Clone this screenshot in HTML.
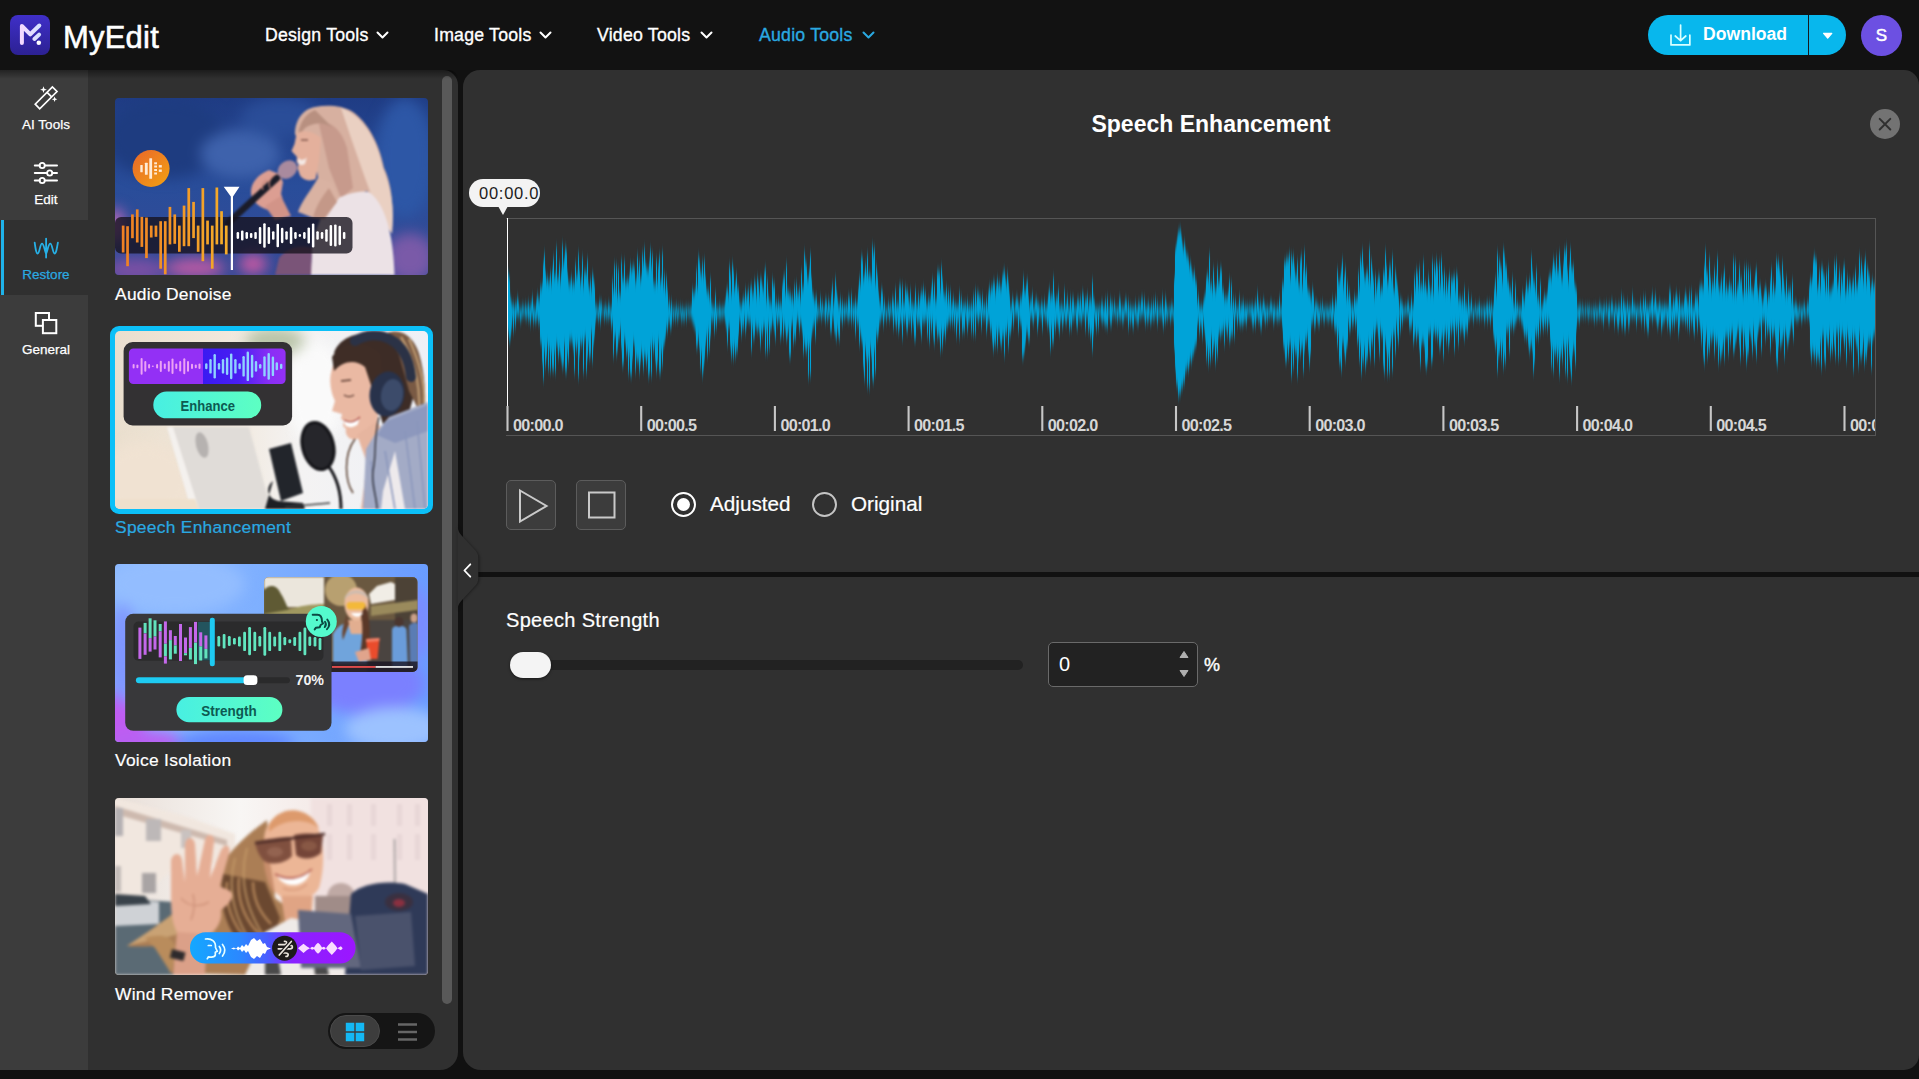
<!DOCTYPE html>
<html lang="en">
<head>
<meta charset="utf-8">
<title>MyEdit - Speech Enhancement</title>
<style>
*{box-sizing:border-box;margin:0;padding:0}
html,body{width:1919px;height:1079px;overflow:hidden;background:#111}
body{font-family:"Liberation Sans",sans-serif;color:#fff;position:relative}
.abs{position:absolute}
/* top bar */
#top{position:absolute;left:0;top:0;width:1919px;height:70px;background:#121212}
#logo{position:absolute;left:10px;top:15px;width:40px;height:40px;border-radius:8px;background:linear-gradient(180deg,#3f2fc8 0%,#2c2193 100%)}
#brand{position:absolute;left:63px;top:19.5px;font-size:31px;line-height:36px;letter-spacing:.2px;-webkit-text-stroke:.55px #fff;color:#fff;white-space:nowrap}
.nav{position:absolute;top:23px;font-size:17.7px;letter-spacing:.22px;line-height:24px;white-space:nowrap;color:#fff;-webkit-text-stroke:.35px currentColor}
.nav.on{color:#2aa9e1}
.chev{position:absolute;top:31px;width:13px;height:9px}
#dl{position:absolute;left:1648px;top:15px;width:198px;height:40px;border-radius:20px;background:#08b7ed}
#dl .sep{position:absolute;left:160px;top:0;width:1px;height:40px;background:#15191c}
#dl .t{position:absolute;left:55px;top:8px;font-size:17.6px;line-height:22px;font-weight:bold;color:#fff;white-space:nowrap}
#av{position:absolute;left:1861px;top:15px;-webkit-text-stroke:.5px #fff;width:41px;height:41px;border-radius:50%;background:#6c50e2;text-align:center;font-size:17px;line-height:41px;color:#fff}
/* sidebar */
#side{position:absolute;left:0;top:70px;width:88px;height:1000px;background:#3c3c3c}
.sitem{position:absolute;left:0;width:88px;height:75px;text-align:center}
.sitem .lb{position:absolute;left:0;width:92px;top:47px;font-size:13.5px;line-height:16px;text-align:center;color:#fff;-webkit-text-stroke:.25px currentColor}
.sitem.on{background:#303030}
.sitem.on .lb{color:#2aa9e1}
.sitem.on:before{content:"";position:absolute;left:1px;top:0;width:3px;height:75px;background:#1fb3ea}
.sitem svg{position:absolute}
/* tool list panel */
#list{position:absolute;left:88px;top:70px;width:370px;height:1000px;background:#303030;border-radius:0 15px 18px 0}
#sb{position:absolute;left:442px;top:76px;width:10px;height:928px;border-radius:5px;background:#595959}
.th{position:absolute;left:115px;width:313px;height:177px;border-radius:4px;overflow:hidden}
.cap{position:absolute;left:115px;font-size:17.4px;letter-spacing:.28px;line-height:20px;white-space:nowrap;color:#fff;-webkit-text-stroke:.2px currentColor}
.cap.on{color:#2aa9e1}
/* main panel */
#main{position:absolute;left:463px;top:70px;width:1456px;height:1000px;background:#303030;border-radius:17px 15px 15px 18px}
</style>
</head>
<body>
<div id="top"></div>
<div id="logo"><svg width="40" height="40" viewBox="0 0 40 40" style="position:absolute;left:0;top:0"><defs><linearGradient id="lgm" x1="0" y1="0" x2="1" y2="0"><stop offset="0" stop-color="#f3d9ff"/><stop offset="1" stop-color="#d6e2ff"/></linearGradient></defs><path d="M11.900 27.900L11.900 11L20.300 19.300L29.300 10.500M29.100 19.600L24.400 24" stroke="url(#lgm)" stroke-width="4" fill="none" stroke-linecap="round" stroke-linejoin="round"/><circle cx="28.800" cy="27.700" r="2.300" fill="#fff"/></svg></div>
<div id="brand">MyEdit</div>
<div class="nav" style="left:265px">Design Tools</div>
<div class="nav" style="left:434px">Image Tools</div>
<div class="nav" style="left:597px">Video Tools</div>
<div class="nav on" style="left:759px">Audio Tools</div>
<svg class="chev" style="left:376px" viewBox="0 0 13 9"><path d="M1.500 1.500L6.500 6.500L11.500 1.500" stroke="#fff" stroke-width="2" fill="none" stroke-linecap="round" stroke-linejoin="round"/></svg><svg class="chev" style="left:539px" viewBox="0 0 13 9"><path d="M1.500 1.500L6.500 6.500L11.500 1.500" stroke="#fff" stroke-width="2" fill="none" stroke-linecap="round" stroke-linejoin="round"/></svg><svg class="chev" style="left:700px" viewBox="0 0 13 9"><path d="M1.500 1.500L6.500 6.500L11.500 1.500" stroke="#fff" stroke-width="2" fill="none" stroke-linecap="round" stroke-linejoin="round"/></svg><svg class="chev" style="left:862px" viewBox="0 0 13 9"><path d="M1.500 1.500L6.500 6.500L11.500 1.500" stroke="#2aa9e1" stroke-width="2" fill="none" stroke-linecap="round" stroke-linejoin="round"/></svg>
<div id="dl"><div class="sep"></div><svg width="198" height="40" viewBox="0 0 198 40" style="position:absolute;left:0;top:0"><path d="M23 20.200V29.900H41.850V20.200M32.600 10.100V25.700M27.250 21L32.600 25.700L37.800 21" stroke="#d9ffff" stroke-width="1.700" fill="none" stroke-linecap="round" stroke-linejoin="round"/><path d="M175.600 18.300L183.800 18.300L179.700 23.200Z" fill="#fff" stroke="#fff" stroke-width="1.200" stroke-linejoin="round"/></svg><div class="t">Download</div></div>
<div id="av">S</div>

<div id="side">
 <div class="sitem" style="top:0"><svg style="left:30px;top:10px" width="32" height="32" viewBox="0 0 32 32"><path d="M5.200 24.200L9.700 28.800L27 11.500L22.400 6.900Z M17.300 12.600L21.600 16.900" stroke="#fff" stroke-width="1.700" fill="none" stroke-linejoin="miter"/><path d="M13.500 6.300L14.400 8.800L16.900 9.700L14.400 10.600L13.500 13.100L12.600 10.600L10.100 9.700L12.600 8.800Z M24.600 16.500L25.400 18.500L27.400 19.300L25.400 20.100L24.600 22.100L23.800 20.100L21.800 19.300L23.800 18.500Z" fill="#fff"/></svg><div class="lb">AI Tools</div></div>
 <div class="sitem" style="top:75px"><svg style="left:30px;top:10px" width="32" height="32" viewBox="0 0 32 32"><path d="M4.800 10.550H9.600M14.800 10.550H27M4.800 18H17.100M22.300 18H27M4.800 25.500H9.600M14.800 25.500H27" stroke="#fff" stroke-width="2" stroke-linecap="round"/><circle cx="12.200" cy="10.550" r="2.600" fill="none" stroke="#fff" stroke-width="1.800"/><circle cx="19.700" cy="18" r="2.600" fill="none" stroke="#fff" stroke-width="1.800"/><circle cx="12.200" cy="25.500" r="2.600" fill="none" stroke="#fff" stroke-width="1.800"/></svg><div class="lb">Edit</div></div>
 <div class="sitem on" style="top:150px"><svg style="left:30px;top:10px" width="32" height="32" viewBox="0 0 32 32"><path d="M4.700 12.600C5.600 19 6.200 23.500 7.700 23.500C9.600 23.500 10 13.600 12 13.600C13.800 13.600 14.400 20 16.100 23.800C17.800 20 18.400 13.600 20.300 13.600C22.300 13.600 22.700 23.500 24.600 23.500C26.100 23.500 26.800 19 27.900 12.600M16.100 8.600V27.500" stroke="#27b0e6" stroke-width="1.800" fill="none" stroke-linecap="round" stroke-linejoin="round"/></svg><div class="lb">Restore</div></div>
 <div class="sitem" style="top:225px"><svg style="left:30px;top:10px" width="32" height="32" viewBox="0 0 32 32"><rect x="5.800" y="8" width="13.200" height="12.800" fill="none" stroke="#fff" stroke-width="2"/><rect x="12.900" y="15" width="13.400" height="13.200" fill="#3c3c3c" stroke="#fff" stroke-width="2"/></svg><div class="lb">General</div></div>
</div>

<div id="list"></div>
<div id="sb"></div>
<div style="position:absolute;left:0;top:70px;width:458px;height:9px;border-radius:0 15px 0 0;background:linear-gradient(rgba(0,0,0,.42),rgba(0,0,0,0))"></div>
<div id="main"></div>
<svg class="abs" style="left:452px;top:520px;z-index:5" width="34" height="96" viewBox="0 0 34 96"><defs><filter id="tabsh" x="-30%" y="-10%" width="160%" height="120%"><feGaussianBlur stdDeviation="1.500"/></filter></defs><path d="M6 4C6 11 8 14 12 18L23 30C26 33 27.500 35 27.500 39V58C27.500 62 26 64 23 67L12 79C8 83 6 86 6 92Z" fill="#000" opacity=".4" filter="url(#tabsh)"/><path d="M5.500 3C5.500 10 7 13 11 17L22 29C25 32 26.300 34 26.300 38V58C26.300 62 25 64 22 67L11 79C7 83 5.500 86 5.500 92Z" fill="#303030"/><path d="M18.300 44.300L12.400 50.500L18.300 56.700" stroke="#fff" stroke-width="1.800" fill="none" stroke-linecap="round" stroke-linejoin="round"/></svg>

<style>
.th svg{position:absolute;left:0;top:0;display:block}
#selb{position:absolute;left:110px;top:326px;width:323px;height:188px;border-radius:9px;background:#0cc0f8}
.pilltxt{font-family:"Liberation Sans",sans-serif;font-weight:bold}
</style>
<div class="th" style="top:98px"><svg width="313" height="177" viewBox="0 0 313 177">
<defs>
<filter id="b1" x="-10%" y="-10%" width="120%" height="120%" color-interpolation-filters="sRGB"><feGaussianBlur stdDeviation="7"/></filter>
<filter id="b2" x="-10%" y="-10%" width="120%" height="120%" color-interpolation-filters="sRGB"><feGaussianBlur stdDeviation="1.6"/></filter>
<filter id="b3" x="-10%" y="-10%" width="120%" height="120%" color-interpolation-filters="sRGB"><feGaussianBlur stdDeviation="0.8"/></filter>
<linearGradient id="g1bg" x1="0" y1="0" x2="0" y2="1"><stop offset="0" stop-color="#1f3c84"/><stop offset=".5" stop-color="#294d9a"/><stop offset="1" stop-color="#364a96"/></linearGradient>
<linearGradient id="g1o" x1="0" y1="0" x2="1" y2="0"><stop offset="0" stop-color="#f07d1e"/><stop offset="1" stop-color="#f2a628"/></linearGradient>
<linearGradient id="g1c" x1="0" y1="0" x2="1" y2="1"><stop offset="0" stop-color="#e9662a"/><stop offset="1" stop-color="#f2a212"/></linearGradient>
</defs>
<rect width="313" height="177" fill="url(#g1bg)"/>
<g filter="url(#b1)">
<ellipse cx="0" cy="128" rx="10" ry="18" fill="#b868b8"/><ellipse cx="20" cy="172" rx="30" ry="12" fill="#7a50a4"/>
<ellipse cx="80" cy="170" rx="30" ry="10" fill="#b85aa4"/>
<ellipse cx="138" cy="166" rx="14" ry="10" fill="#c85aa4"/>
<ellipse cx="50" cy="40" rx="60" ry="40" fill="#1e3c80"/>
<ellipse cx="125" cy="56" rx="40" ry="24" fill="#3e62ac"/>
<ellipse cx="290" cy="60" rx="30" ry="60" fill="#2d57a6"/>
<ellipse cx="295" cy="160" rx="25" ry="25" fill="#7a5aa8"/>
<ellipse cx="165" cy="20" rx="40" ry="20" fill="#2a4d98"/>
</g>
<g filter="url(#b3)">
<path d="M200 9C188 11 180 22 180 36L184 44L200 60L203 80C196 92 186 104 183 114L196 118L209 121L222 104L252 93L276 134C280 110 276 84 269 70C264 44 252 24 238 14C226 7 212 7 200 9Z" fill="#d7b0a0"/>
<path d="M226 10C246 16 262 40 268 70C276 90 280 110 277 136L262 112L250 80L236 40Z" fill="#ead0c2"/>
<path d="M204 26C214 22 226 30 232 50L238 90L226 100L214 70Z" fill="#c79a8c"/>
<path d="M200 12C190 16 184 26 183 38L190 30C198 24 210 24 218 30Z" fill="#b89080"/>
<path d="M181.500 36C186 32 196 32 206 40L204 62L200.700 81C194 84 188 82 185 77.600L182.500 70L183.500 66L181.500 64L182 59L176.500 53L179.500 46Z" fill="#e4b09c"/>
<path d="M183 60C186 63 190 62 192 59L190 66C187 68 184 67 183 65Z" fill="#f4e8e4"/>
<path d="M186 42L193 42" stroke="#6a4038" stroke-width="1.2"/>
<path d="M197 151C200 130 208 112 218 103C230 96 244 92 254 94C268 104 278 130 279.500 177L195.500 177Z" fill="#ece2e6"/>
<path d="M160 177L164 160C172 150 184 146 197 150L196 177Z" fill="#7a5478"/>
<path d="M203 80C198 92 188 104 184 114L198 120L210 121L224 100L216 84Z" fill="#d9b2a2"/>
<path d="M214 90C206 100 200 110 198 120L209 121L222 104Z" fill="#c49888"/>
<path d="M136 94C136 84 144 76 154 72L164 76L168 84L166 96C170 104 166 112 158 114L148 110C140 106 136 100 136 94Z" fill="#dc9e92"/>
<path d="M150 108L166 98L176 118L160 122Z" fill="#d29488"/>
<path d="M162 80L113 125" stroke="#1b1c28" stroke-width="6.500" stroke-linecap="round"/>
<ellipse cx="172.400" cy="71.600" rx="10.500" ry="8.500" transform="rotate(-38 172.400 71.600)" fill="#a98a9e"/>
<path d="M152 82C148 84 146 88 148 92M158 78C154 82 153 86 155 90" stroke="#c58678" stroke-width="1.200" fill="none"/>
</g>
<rect x="0" y="119" width="237.5" height="36.5" rx="6" fill="#16121c" fill-opacity=".78"/>
<rect x="6.8" y="127.6" width="2.700" height="26.9" fill="#f08024"/>
<rect x="11.2" y="128.2" width="2.700" height="40.0" fill="#f08224"/>
<rect x="16.1" y="116.4" width="2.700" height="23.8" fill="#f08424"/>
<rect x="20.9" y="111.4" width="2.700" height="33.1" fill="#f08624"/>
<rect x="25.5" y="118.9" width="2.700" height="30.0" fill="#f08825"/>
<rect x="30.1" y="119.5" width="2.700" height="40.6" fill="#f18a25"/>
<rect x="34.9" y="127.6" width="2.700" height="11.9" fill="#f18c25"/>
<rect x="39.6" y="127.6" width="2.700" height="11.2" fill="#f18e25"/>
<rect x="44.3" y="123.2" width="2.700" height="47.5" fill="#f19026"/>
<rect x="48.9" y="123.2" width="2.700" height="53.1" fill="#f29226"/>
<rect x="53.6" y="108.9" width="2.700" height="37.5" fill="#f29426"/>
<rect x="58.4" y="116.4" width="2.700" height="29.4" fill="#f29627"/>
<rect x="63.0" y="127.6" width="2.700" height="26.2" fill="#f29827"/>
<rect x="67.7" y="107.6" width="2.700" height="40.6" fill="#f29a27"/>
<rect x="72.4" y="90.1" width="2.700" height="58.1" fill="#f39c27"/>
<rect x="77.2" y="103.9" width="2.700" height="36.2" fill="#f39e28"/>
<rect x="81.8" y="127.6" width="2.700" height="26.2" fill="#f3a028"/>
<rect x="86.5" y="90.1" width="2.700" height="73.1" fill="#f3a228"/>
<rect x="91.2" y="122.6" width="2.700" height="23.8" fill="#f4a428"/>
<rect x="95.9" y="127.6" width="2.700" height="43.1" fill="#f4a629"/>
<rect x="100.5" y="89.5" width="2.700" height="56.9" fill="#f4a829"/>
<rect x="105.2" y="113.2" width="2.700" height="33.1" fill="#f4aa29"/>
<rect x="109.9" y="127.6" width="2.700" height="28.8" fill="#f5ac2a"/>
<path d="M108.700 88.800L124.500 88.800L118 98.500L118 172L115.800 172L115.800 98.500Z" fill="#fff"/>
<rect x="121.6" y="134.1" width="2.500" height="6.8" rx="1.100" fill="#fff"/>
<rect x="126.0" y="132.4" width="2.500" height="10.2" rx="1.100" fill="#fff"/>
<rect x="130.5" y="134.1" width="2.500" height="6.8" rx="1.100" fill="#fff"/>
<rect x="134.9" y="134.9" width="2.500" height="5.2" rx="1.100" fill="#fff"/>
<rect x="139.3" y="133.9" width="2.500" height="7.2" rx="1.100" fill="#fff"/>
<rect x="143.8" y="128.9" width="2.500" height="17.2" rx="1.100" fill="#fff"/>
<rect x="148.2" y="125.2" width="2.500" height="24.6" rx="1.100" fill="#fff"/>
<rect x="152.6" y="128.9" width="2.500" height="17.2" rx="1.100" fill="#fff"/>
<rect x="157.0" y="133.2" width="2.500" height="8.6" rx="1.100" fill="#fff"/>
<rect x="161.5" y="125.7" width="2.500" height="23.6" rx="1.100" fill="#fff"/>
<rect x="165.9" y="129.8" width="2.500" height="15.4" rx="1.100" fill="#fff"/>
<rect x="170.3" y="133.2" width="2.500" height="8.6" rx="1.100" fill="#fff"/>
<rect x="174.8" y="128.9" width="2.500" height="17.2" rx="1.100" fill="#fff"/>
<rect x="179.2" y="134.1" width="2.500" height="6.8" rx="1.100" fill="#fff"/>
<rect x="183.6" y="136.1" width="2.500" height="2.8" rx="1.100" fill="#fff"/>
<rect x="188.1" y="134.1" width="2.500" height="6.8" rx="1.100" fill="#fff"/>
<rect x="192.5" y="129.5" width="2.500" height="16.0" rx="1.100" fill="#fff"/>
<rect x="196.9" y="125.5" width="2.500" height="24.0" rx="1.100" fill="#fff"/>
<rect x="201.3" y="133.2" width="2.500" height="8.6" rx="1.100" fill="#fff"/>
<rect x="205.8" y="134.1" width="2.500" height="6.8" rx="1.100" fill="#fff"/>
<rect x="210.2" y="131.2" width="2.500" height="12.6" rx="1.100" fill="#fff"/>
<rect x="214.6" y="127.0" width="2.500" height="21.0" rx="1.100" fill="#fff"/>
<rect x="219.1" y="126.4" width="2.500" height="22.2" rx="1.100" fill="#fff"/>
<rect x="223.5" y="127.8" width="2.500" height="19.4" rx="1.100" fill="#fff"/>
<rect x="227.9" y="133.9" width="2.500" height="7.2" rx="1.100" fill="#fff"/>
<circle cx="36.070" cy="70.500" r="18.500" fill="url(#g1c)"/><rect x="25.3" y="66.9" width="2.4" height="7.4" rx=".5" fill="#ffead4"/><rect x="29.9" y="64.8" width="2.8" height="11.9" rx=".5" fill="#ffead4"/><rect x="34.3" y="60.2" width="2.8" height="20.6" rx=".5" fill="#ffead4"/><rect x="39.200" y="64.3" width="2.800" height="2" fill="#ffead4"/><rect x="39.200" y="67.5" width="2.800" height="2" fill="#ffead4"/><rect x="39.200" y="71.0" width="2.800" height="2" fill="#ffead4"/><rect x="39.200" y="74.5" width="2.800" height="2" fill="#ffead4"/><rect x="43.800" y="67.1" width="3" height="2.400" fill="#ffead4"/><rect x="43.800" y="71.5" width="3" height="2.400" fill="#ffead4"/>
</svg></div>
<div class="cap" style="top:284px">Audio Denoise</div>
<div id="selb"></div>
<div class="th" style="top:331px;height:178px;border-radius:5px"><svg width="313" height="178" viewBox="0 0 313 178">
<defs>
<linearGradient id="g2bg" x1="0" y1="0" x2="1" y2="0"><stop offset="0" stop-color="#eadfce"/><stop offset=".35" stop-color="#f1e8dc"/><stop offset=".6" stop-color="#f4f3f3"/><stop offset="1" stop-color="#eef0f6"/></linearGradient>
<linearGradient id="g2p" x1="0" y1="0" x2="1" y2="0"><stop offset="0" stop-color="#9330f5"/><stop offset=".472" stop-color="#9330f5"/><stop offset=".474" stop-color="#3a1af2"/><stop offset=".7" stop-color="#4a1ef2"/><stop offset=".9" stop-color="#8a2ef5"/><stop offset="1" stop-color="#9330f5"/></linearGradient>
<linearGradient id="g2e" x1="0" y1="0" x2="1" y2="0"><stop offset="0" stop-color="#48efe2"/><stop offset="1" stop-color="#5dffc2"/></linearGradient>
</defs>
<rect width="313" height="178" fill="url(#g2bg)"/>
<g filter="url(#b1)"><ellipse cx="30" cy="150" rx="50" ry="40" fill="#f0e2d2"/><ellipse cx="160" cy="10" rx="30" ry="14" fill="#b9c4a8"/><ellipse cx="200" cy="60" rx="30" ry="50" fill="#fafafa"/></g>
<g filter="url(#b3)">
<path d="M52 96L134 96L156 178L76 178Z" fill="#e0dcd8"/>
<path d="M52 96L58 96L84 178L76 178Z" fill="#f4f1ee"/>
<ellipse cx="87" cy="114" rx="6" ry="13" transform="rotate(-14 87 114)" fill="#b6b2b0"/>
<path d="M0 168L80 168L84 178L0 178Z" fill="#efe0cc"/>
<path d="M219 22C224 6 246 -2 268 4C290 8 300 30 300 60L290 96L270 100L258 60L244 34Z" fill="#3d2c26"/>
<path d="M272 2C288 -4 302 8 306 30C312 56 310 74 306 84L294 60L284 24Z" fill="#7a5a44"/>
<path d="M286 6C296 22 306 50 304 80M294 8C304 30 310 50 309 72" stroke="#b8956e" stroke-width="2.500" fill="none"/>
<path d="M226 20C236 14 252 16 262 28L266 60L262 92C258 102 246 110 236 108C232 106 230 102 231 98L228 95L229 90L226 88L227 83L217 80L220 70C216 62 214 50 216 42C218 34 220 26 226 20Z" fill="#eab9a3"/>
<path d="M217 26C228 8 254 8 266 24L270 62L258 60L250 36C240 28 228 30 219 40Z" fill="#3f2d26"/>
<path d="M226 50L236 49M229 64C232 66 236 66 239 64" stroke="#5a3a30" stroke-width="1.300" fill="none"/>
<path d="M229 89C234 92 240 91 244 87L243 93C239 97 233 97 230 94Z" fill="#fff"/>
<path d="M229 89C234 92 240 91 245 86" stroke="#b0554f" stroke-width="1.200" fill="none"/>
<path d="M242 104L262 90L274 112L262 178L246 178L252 132Z" fill="#e6b59f"/>
<path d="M251 118L262 100L274 86L313 71L313 178L248 178Z" fill="#a3abc6"/>
<path d="M262 104L272 90L313 74L313 100L280 112Z" fill="#8d98bd"/>
<path d="M268 160L280 120L290 178L266 178Z" fill="#eeeaec"/>
<path d="M256 130L262 178M270 120L280 178M290 100L300 178M302 90L310 178" stroke="#8a96bc" stroke-width="1.500" fill="none"/>
<path d="M240 10C262 -3 292 6 296 46" stroke="#2b3246" stroke-width="10" fill="none" stroke-linecap="round"/>
<ellipse cx="272" cy="63" rx="17.400" ry="22.600" transform="rotate(8 272 63)" fill="#28324b"/>
<ellipse cx="277" cy="64" rx="11" ry="16" transform="rotate(8 277 64)" fill="#3c4b6a"/>
<path d="M264 86C258 110 262 120 258 140C256 155 262 165 262 178" stroke="#2a2a30" stroke-width="1.300" fill="none"/>
<path d="M240 108C228 124 230 150 238 162" stroke="#5a4030" stroke-width="1.500" fill="none"/>
<path d="M154 118L176 112L188 162L166 170Z" fill="#22252b"/>
<path d="M158 150C150 156 152 168 164 170L188 172L190 178L150 178Z" fill="#1d1f24"/>
<ellipse cx="203" cy="115" rx="15.5" ry="24" transform="rotate(-14 203 115)" fill="#26262b" stroke="#141418" stroke-width="3"/>
<path d="M214 136C224 150 226 165 226 178" stroke="#141418" stroke-width="3" fill="none"/>
<path d="M170 176L215 172" stroke="#3a3a3a" stroke-width="1.5"/>
</g>
<rect x="8.6" y="11" width="168.5" height="83.5" rx="9" fill="#333133"/>
<rect x="13.900" y="17.400" width="156.700" height="35.700" rx="4.500" fill="url(#g2p)"/>
<rect x="17.6" y="33.0" width="2" height="4.6" rx="1" fill="#eba2f4"/>
<rect x="21.4" y="33.4" width="2" height="3.8" rx="1" fill="#eba2f4"/>
<rect x="25.6" y="26.9" width="2" height="16.8" rx="1" fill="#eba2f4"/>
<rect x="29.3" y="29.9" width="2" height="10.8" rx="1" fill="#eba2f4"/>
<rect x="33.1" y="33.0" width="2" height="4.6" rx="1" fill="#eba2f4"/>
<rect x="36.8" y="34.5" width="2" height="1.6" rx="1" fill="#eba2f4"/>
<rect x="41.1" y="33.0" width="2" height="4.6" rx="1" fill="#eba2f4"/>
<rect x="44.8" y="29.7" width="2" height="11.2" rx="1" fill="#eba2f4"/>
<rect x="48.8" y="32.5" width="2" height="5.6" rx="1" fill="#eba2f4"/>
<rect x="52.8" y="29.9" width="2" height="10.8" rx="1" fill="#eba2f4"/>
<rect x="56.5" y="27.6" width="2" height="15.4" rx="1" fill="#eba2f4"/>
<rect x="60.3" y="32.5" width="2" height="5.6" rx="1" fill="#eba2f4"/>
<rect x="64.2" y="30.1" width="2" height="10.4" rx="1" fill="#eba2f4"/>
<rect x="68.3" y="27.3" width="2" height="16.0" rx="1" fill="#eba2f4"/>
<rect x="72.0" y="29.9" width="2" height="10.8" rx="1" fill="#eba2f4"/>
<rect x="76.0" y="32.7" width="2" height="5.2" rx="1" fill="#eba2f4"/>
<rect x="79.8" y="33.4" width="2" height="3.8" rx="1" fill="#eba2f4"/>
<rect x="83.5" y="32.5" width="2" height="5.6" rx="1" fill="#eba2f4"/>
<rect x="90.1" y="32.3" width="2.400" height="6.0" rx="1.200" fill="#8fd2ff"/>
<rect x="94.3" y="28.0" width="2.400" height="14.6" rx="1.200" fill="#8fd2ff"/>
<rect x="98.5" y="23.1" width="2.400" height="24.4" rx="1.200" fill="#8fd2ff"/>
<rect x="102.8" y="32.0" width="2.400" height="6.6" rx="1.200" fill="#8fd2ff"/>
<rect x="106.8" y="28.0" width="2.400" height="14.6" rx="1.200" fill="#8fd2ff"/>
<rect x="110.9" y="26.6" width="2.400" height="17.4" rx="1.200" fill="#8fd2ff"/>
<rect x="115.0" y="22.4" width="2.400" height="25.8" rx="1.200" fill="#8fd2ff"/>
<rect x="119.2" y="28.0" width="2.400" height="14.6" rx="1.200" fill="#8fd2ff"/>
<rect x="123.4" y="32.3" width="2.400" height="6.0" rx="1.200" fill="#8fd2ff"/>
<rect x="127.4" y="25.0" width="2.400" height="20.6" rx="1.200" fill="#8fd2ff"/>
<rect x="131.6" y="20.5" width="2.400" height="29.6" rx="1.200" fill="#8fd2ff"/>
<rect x="135.9" y="23.8" width="2.400" height="23.0" rx="1.200" fill="#8fd2ff"/>
<rect x="139.8" y="29.9" width="2.400" height="10.8" rx="1.200" fill="#8fd2ff"/>
<rect x="144.0" y="33.0" width="2.400" height="4.6" rx="1.200" fill="#8fd2ff"/>
<rect x="148.3" y="25.2" width="2.400" height="20.2" rx="1.200" fill="#8fd2ff"/>
<rect x="152.5" y="21.9" width="2.400" height="26.8" rx="1.200" fill="#8fd2ff"/>
<rect x="156.7" y="25.5" width="2.400" height="19.6" rx="1.200" fill="#8fd2ff"/>
<rect x="160.6" y="31.3" width="2.400" height="8.0" rx="1.200" fill="#8fd2ff"/>
<rect x="165.0" y="32.7" width="2.400" height="5.2" rx="1.200" fill="#8fd2ff"/>
<rect x="38.300" y="60.600" width="107.900" height="26.700" rx="13.300" fill="url(#g2e)"/>
<text x="92.800" y="79.800" text-anchor="middle" class="pilltxt" font-size="15" fill="#0d5a52" textLength="54.5" lengthAdjust="spacingAndGlyphs">Enhance</text>
</svg></div>
<div class="cap on" style="top:517px">Speech Enhancement</div>
<div class="th" style="top:564px;height:178px"><svg width="313" height="178" viewBox="0 0 313 178">
<defs>
<linearGradient id="g3bg" x1="0" y1="0" x2="1" y2="0"><stop offset="0" stop-color="#8ab8ff"/><stop offset=".45" stop-color="#7fb0ff"/><stop offset="1" stop-color="#6a9dff"/></linearGradient>
<linearGradient id="g3e" x1="0" y1="0" x2="1" y2="0"><stop offset="0" stop-color="#48efe2"/><stop offset="1" stop-color="#5dffc2"/></linearGradient>
<clipPath id="c3v"><rect x="149" y="13" width="153.5" height="95" rx="5"/></clipPath>
</defs>
<rect width="313" height="178" fill="url(#g3bg)"/>
<g filter="url(#b1)">
<ellipse cx="60" cy="20" rx="70" ry="30" fill="#93bdff"/>
<ellipse cx="250" cy="120" rx="60" ry="30" fill="#7b80ff"/>
<ellipse cx="290" cy="60" rx="30" ry="40" fill="#7a8cff"/>
<ellipse cx="0" cy="178" rx="32" ry="50" fill="#c05cf2"/>
<ellipse cx="30" cy="180" rx="40" ry="14" fill="#b860f2"/>
<ellipse cx="120" cy="180" rx="60" ry="14" fill="#5f86ff"/>
<ellipse cx="280" cy="165" rx="50" ry="22" fill="#9cc2ff"/>
<ellipse cx="8" cy="90" rx="14" ry="50" fill="#7f95ff"/>
</g>
<g clip-path="url(#c3v)"><rect x="149" y="13" width="154" height="95" fill="#7a6a4c"/><g filter="url(#b3)">
<rect x="149" y="13" width="62" height="30" fill="#ebe6dc"/>
<path d="M149 26C154 20 162 20 166 30C170 36 172 44 176 48L149 52Z" fill="#5f5a34"/>
<path d="M172 46C184 42 198 40 209 40L211 56L149 56L149 50Z" fill="#a09860"/>
<rect x="149" y="54" width="70" height="54" fill="#807a4e"/>
<rect x="209" y="13" width="94" height="95" fill="#6a5840"/>
<ellipse cx="226" cy="26" rx="16" ry="16" fill="#b8a070"/>
<path d="M254 30L262 22L276 18L280 20L280 36L256 40Z" fill="#f1ede6"/>
<rect x="280" y="13" width="23" height="50" fill="#4c4236"/>
<path d="M256 42L303 36L303 46L256 52Z" fill="#9a8a5c"/>
<rect x="252" y="56" width="51" height="52" fill="#4a4440"/>
<path d="M277 66C277 60 291 60 291.500 66L293 104L277 104Z" fill="#6a9cda"/><ellipse cx="284" cy="58" rx="4.500" ry="5" fill="#4a3630"/>
<path d="M294 62C296 58 303 58 303 60L303 104L295 104Z" fill="#5a7cb4"/><ellipse cx="299" cy="54" rx="3.500" ry="4.500" fill="#caa088"/>
<path d="M218 70C224 58 240 54 250 58L254 80L252 100L218 100Z" fill="#70a4dc"/>
<path d="M232 56L250 56L248 70L236 70Z" fill="#e2ae90"/>
<ellipse cx="241.500" cy="40" rx="12" ry="16.500" fill="#ecbc9e"/>
<path d="M229.500 36C230 24 252 22 254 36L252 34C246 28 236 28 231 34Z" fill="#cdbcb0"/>
<path d="M250 40C256 56 256 76 252 96L244 94C248 78 248 60 246 52Z" fill="#5a3828"/>
<path d="M232 50C228 60 226 70 228 76L234 60Z" fill="#6a4632"/>
<rect x="231.500" y="38" width="19" height="7.500" rx="3.700" fill="#f3b93a"/>
<path d="M236 49C239 54 245 54 248 49Z" fill="#fff"/>
<path d="M251 75L264.500 74L262.500 95L253 95Z" fill="#ea4c2c"/><path d="M251 75L264.500 74L264.300 77L251.200 78Z" fill="#f4846a"/>
<path d="M240 88L254 84L256 96L244 98Z" fill="#e0a48c"/>
</g>
<rect x="149" y="97.500" width="154" height="11" fill="#1a1420" fill-opacity=".8"/>
<rect x="217" y="102.100" width="43.600" height="1.700" fill="#f25050"/><rect x="260.600" y="102.100" width="37.400" height="1.700" fill="#f2f2f2"/>
</g>
<rect x="10.2" y="49.8" width="206.3" height="117" rx="8" fill="#38383a"/>
<rect x="18.500" y="57.500" width="190" height="39.300" rx="5" fill="#2b2b2c"/>
<rect x="82.700" y="57.900" width="12.500" height="38.500" fill="#23545e"/>
<rect x="23.4" y="63.6" width="3" height="31.3" fill="#c468ea"/>
<rect x="28.6" y="58.9" width="3" height="10.4" fill="#62e2bc"/>
<rect x="28.6" y="69.4" width="3" height="21.4" fill="#c468ea"/>
<rect x="33.6" y="54.3" width="3" height="19.8" fill="#62e2bc"/>
<rect x="33.6" y="74.1" width="3" height="13.5" fill="#c468ea"/>
<rect x="38.5" y="56.3" width="3" height="16.2" fill="#62e2bc"/>
<rect x="38.5" y="72.5" width="3" height="13.0" fill="#c468ea"/>
<rect x="43.7" y="60.0" width="3" height="7.3" fill="#62e2bc"/>
<rect x="43.7" y="67.3" width="3" height="26.1" fill="#c468ea"/>
<rect x="48.9" y="57.4" width="3" height="22.4" fill="#c468ea"/>
<rect x="48.9" y="79.8" width="3" height="12.5" fill="#62e2bc"/>
<rect x="48.9" y="92.3" width="3" height="7.3" fill="#c468ea"/>
<rect x="53.9" y="66.2" width="3" height="9.9" fill="#c468ea"/>
<rect x="53.9" y="76.1" width="3" height="19.3" fill="#62e2bc"/>
<rect x="58.8" y="72.0" width="3" height="9.4" fill="#c468ea"/>
<rect x="58.8" y="81.4" width="3" height="8.3" fill="#62e2bc"/>
<rect x="64.0" y="60.0" width="3" height="37.0" fill="#c468ea"/>
<rect x="69.0" y="73.5" width="3" height="15.6" fill="#c468ea"/>
<rect x="69.0" y="89.2" width="3" height="2.1" fill="#62e2bc"/>
<rect x="73.9" y="63.1" width="3" height="20.8" fill="#c468ea"/>
<rect x="73.9" y="84.0" width="3" height="11.5" fill="#62e2bc"/>
<rect x="79.0" y="57.9" width="3" height="20.8" fill="#c468ea"/>
<rect x="79.0" y="78.7" width="3" height="21.4" fill="#62e2bc"/>
<rect x="84.2" y="68.3" width="3" height="14.1" fill="#c468ea"/>
<rect x="84.2" y="82.4" width="3" height="14.1" fill="#62e2bc"/>
<rect x="89.4" y="71.4" width="3" height="13.5" fill="#c468ea"/>
<rect x="89.4" y="85.0" width="3" height="9.4" fill="#62e2bc"/>
<rect x="94.800" y="53.700" width="5" height="48.500" rx="2.200" fill="#1ecaf2"/>
<rect x="102.4" y="72.0" width="2.800" height="10.4" rx="1.200" fill="#62e6c0"/>
<rect x="107.7" y="69.9" width="2.800" height="14.6" rx="1.200" fill="#62e6c0"/>
<rect x="112.9" y="72.0" width="2.800" height="9.9" rx="1.200" fill="#62e6c0"/>
<rect x="118.0" y="74.1" width="2.800" height="6.3" rx="1.200" fill="#62e6c0"/>
<rect x="123.0" y="72.5" width="2.800" height="9.9" rx="1.200" fill="#62e6c0"/>
<rect x="128.2" y="67.8" width="2.800" height="19.3" rx="1.200" fill="#62e6c0"/>
<rect x="133.2" y="63.1" width="2.800" height="28.1" rx="1.200" fill="#62e6c0"/>
<rect x="138.4" y="67.8" width="2.800" height="19.3" rx="1.200" fill="#62e6c0"/>
<rect x="143.4" y="72.0" width="2.800" height="10.4" rx="1.200" fill="#62e6c0"/>
<rect x="148.4" y="63.1" width="2.800" height="28.7" rx="1.200" fill="#62e6c0"/>
<rect x="153.3" y="67.8" width="2.800" height="19.3" rx="1.200" fill="#62e6c0"/>
<rect x="158.3" y="72.5" width="2.800" height="9.9" rx="1.200" fill="#62e6c0"/>
<rect x="163.4" y="67.8" width="2.800" height="19.3" rx="1.200" fill="#62e6c0"/>
<rect x="168.4" y="73.0" width="2.800" height="8.3" rx="1.200" fill="#62e6c0"/>
<rect x="173.4" y="75.3" width="2.800" height="4.0" rx="1.200" fill="#62e6c0"/>
<rect x="178.3" y="73.0" width="2.800" height="8.9" rx="1.200" fill="#62e6c0"/>
<rect x="183.5" y="67.8" width="2.800" height="19.3" rx="1.200" fill="#62e6c0"/>
<rect x="188.5" y="63.6" width="2.800" height="27.6" rx="1.200" fill="#62e6c0"/>
<rect x="193.4" y="72.5" width="2.800" height="9.4" rx="1.200" fill="#62e6c0"/>
<rect x="198.6" y="73.0" width="2.800" height="9.4" rx="1.200" fill="#62e6c0"/>
<rect x="203.6" y="74.1" width="2.800" height="12.0" rx="1.200" fill="#62e6c0"/>
<circle cx="206.300" cy="57.500" r="15.500" fill="#54fbcd"/>
<path d="M197.700 50.700L202.500 50.700C205.500 50.700 207 53.500 207 57.500L208 59.500L205.600 61L204.800 63.200L201 63.700L199.700 65.400" stroke="#0b4a42" stroke-width="2" fill="none" stroke-linecap="round" stroke-linejoin="round"/>
<circle cx="201.900" cy="56" r="1.100" fill="#0b4a42"/>
<path d="M210 57.700C211.200 59.500 211.200 61.500 209.700 63.100M212.300 55.600C214.900 58.800 214.700 62.300 212 65.200" stroke="#0b4a42" stroke-width="1.900" fill="none" stroke-linecap="round"/>
<rect x="20.9" y="113.2" width="154" height="6" rx="3" fill="#2a2a2b"/>
<rect x="20.9" y="113.2" width="112" height="6" rx="3" fill="#1ecbf2"/>
<rect x="128.6" y="111.3" width="13.8" height="9.7" rx="3.5" fill="#fff"/>
<text x="180.5" y="121" class="pilltxt" font-size="14.5" fill="#f2f2f2" textLength="28.5" lengthAdjust="spacingAndGlyphs">70%</text>
<rect x="61.4" y="133" width="106" height="25.3" rx="12.6" fill="url(#g3e)"/>
<text x="114" y="151.5" text-anchor="middle" class="pilltxt" font-size="14.4" fill="#0d5a52" textLength="55.5" lengthAdjust="spacingAndGlyphs">Strength</text>
</svg></div>
<div class="cap" style="top:750px">Voice Isolation</div>
<div class="th" style="top:798px"><svg width="313" height="177" viewBox="0 0 313 177">
<defs>
<linearGradient id="g4p" x1="0" y1="0" x2="1" y2="0"><stop offset="0" stop-color="#14a8ff"/><stop offset=".3" stop-color="#2b88ff"/><stop offset=".47" stop-color="#4a5cff"/><stop offset=".62" stop-color="#8a22ff"/><stop offset="1" stop-color="#9c16ff"/></linearGradient>
<linearGradient id="g4bg" x1="0" y1="0" x2="1" y2="0"><stop offset="0" stop-color="#e9dfd8"/><stop offset=".4" stop-color="#f8f6f4"/><stop offset=".7" stop-color="#f4e8e6"/><stop offset="1" stop-color="#f2e2e2"/></linearGradient>
</defs>
<rect width="313" height="177" fill="url(#g4bg)"/>
<g filter="url(#b2)">
<path d="M0 0L70 18L120 36L120 64L60 70L0 120Z" fill="#f1e7df"/>
<path d="M0 8L112 42L112 48L0 16Z" fill="#cdb9ae"/>
<rect x="0" y="10" width="8" height="28" fill="#b4b0b2"/><rect x="31" y="21" width="15" height="22" fill="#bdb8b8"/><rect x="66" y="32" width="10" height="18" fill="#c9c2c0"/>
<rect x="0" y="68" width="6" height="26" fill="#c2bbb8"/><rect x="27" y="75" width="14" height="20" fill="#a9a4a4"/>
<path d="M0 100L60 104L70 177L0 177Z" fill="#5a6a74"/>
<path d="M0 100L44 104L44 126L0 128Z" fill="#cfd2d6"/>
<path d="M0 96L30 98L36 106L0 108Z" fill="#39424a"/>
<rect x="196" y="0" width="117" height="100" fill="#f1e1e0"/>
<rect x="212" y="6" width="5" height="22" fill="#e7d6d6"/><rect x="212" y="36" width="5" height="26" fill="#e7d6d6"/>
<rect x="232" y="6" width="5" height="22" fill="#e7d6d6"/><rect x="232" y="36" width="5" height="26" fill="#e7d6d6"/>
<rect x="256" y="6" width="5" height="22" fill="#e7d6d6"/><rect x="256" y="36" width="5" height="26" fill="#e7d6d6"/>
<rect x="282" y="6" width="5" height="22" fill="#e7d6d6"/><rect x="282" y="36" width="5" height="26" fill="#e7d6d6"/>
<rect x="300" y="6" width="5" height="22" fill="#e7d6d6"/><rect x="300" y="36" width="5" height="26" fill="#e7d6d6"/>
<path d="M212 100C212 80 240 80 240 100Z" fill="#bfa9a4"/><path d="M262 100C262 82 292 82 292 100Z" fill="#b9a4a2"/>
<rect x="200" y="98" width="113" height="30" fill="#a08c88"/>
<path d="M279.500 41L280 86" stroke="#777" stroke-width="1.100"/>
<path d="M152 22C132 36 116 52 104 70C84 96 50 124 12 148C24 150 40 146 50 150L55 175L133 177L172 177L176 112L160 100Z" fill="#ab7e55"/>
<path d="M104 70C84 100 48 124 12 148C40 140 70 140 96 120Z" fill="#c9a274"/>
<path d="M30 140C50 134 64 140 60 160L56 175L40 150Z" fill="#b98c5c"/>
<path d="M108 76C104 100 108 130 130 150L150 165L165 120L150 84Z" fill="#6b4830"/><path d="M112 84C110 104 116 126 134 144M124 80C122 100 128 120 146 138M138 84C138 100 144 114 156 126" stroke="#b98a5c" stroke-width="2.200" fill="none"/>
<path d="M120 60C112 90 118 120 140 150M132 50C124 80 130 110 150 140M100 90C92 110 96 140 110 160" stroke="#c49a68" stroke-width="1.600" fill="none"/>
<path d="M150 34C156 14 186 8 200 24C210 40 210 70 204 90C194 106 172 106 160 94C150 80 146 54 150 34Z" fill="#ecb696"/>
<path d="M154 26C166 6 194 8 204 30C192 20 168 20 154 34Z" fill="#dd9a6c"/>
<path d="M150 40C146 60 150 84 160 96L156 70Z" fill="#c98e6c"/>
<path d="M166 98L198 98L196 124L170 124Z" fill="#e0a484"/>
<path d="M130 177L150 134L176 120L200 124L232 177Z" fill="#efebe8"/>
<path d="M150 150L160 140L166 177L150 177ZM196 140L208 150L214 177L200 177Z" fill="#4a4a4a"/>
<path d="M140 44C150 41 166 39 176 39L177 58C170 66 154 68 148 62C143 56 141 50 140 44Z" fill="#80503f"/>
<path d="M179 37C190 35 200 35 208 38L206 55C198 62 186 62 181 57Z" fill="#744538"/>
<path d="M140 45L210 36" stroke="#4a2a26" stroke-width="2.600"/><ellipse cx="160" cy="54" rx="8" ry="5" fill="#a0705c" opacity=".6"/><ellipse cx="194" cy="48" rx="8" ry="5" fill="#96664f" opacity=".6"/>
<path d="M162 77C172 83 186 81 195 73C193 90 168 92 162 77Z" fill="#fff"/>
<path d="M160 76C172 83 186 81 197 71" stroke="#b0564c" stroke-width="1.600" fill="none"/>
<path d="M168 90C176 94 186 92 192 86" stroke="#d89a7c" stroke-width="1.500" fill="none"/>
<path d="M56 62C58 54 66 54 67 62L70 84L70 46C71 38 79 38 80 46L82 78L90 42C92 34 100 36 99 44L95 80L106 52C110 44 117 48 114 56L105 88C110 92 112 90 116 94C120 100 112 108 106 112C108 124 100 134 92 138L64 138C56 126 56 110 56 96Z" fill="#e6ae95"/>
<path d="M62 134L92 136L90 177L58 177Z" fill="#dba088"/>
<path d="M66 100C72 108 84 110 94 104M78 96C80 104 80 112 76 122" stroke="#c98c74" stroke-width="1.200" fill="none"/>
<rect x="57" y="151" width="14" height="9" transform="rotate(14 57 151)" fill="#2e2a2c"/>
<path d="M236 96C246 86 270 82 290 86L313 96L313 177L230 177Z" fill="#2f3a58"/>
<path d="M183 112L236 116L246 170L186 170Z" fill="#62677e"/>
<path d="M240 118L296 114L300 168L246 172Z" fill="#4a526c"/>
<ellipse cx="284" cy="104" rx="14" ry="9" fill="#3a3040"/><ellipse cx="284" cy="105" rx="6" ry="4" fill="#8a3040"/>
</g>
<rect x="75" y="134.300" width="165.500" height="31.200" rx="15.600" fill="url(#g4p)"/>
<path d="M90.500 141C96.500 140 101 143.500 100.500 149.500L102.300 153.300L100.300 154.300L100.300 157C99.800 159.200 96.500 159.300 93.500 158.800L92.300 160.700M93.300 147.500H96.300" stroke="#e6ffff" stroke-width="1.700" fill="none" stroke-linecap="round" stroke-linejoin="round"/>
<path d="M104.300 148.500C105.800 150.500 105.800 153.500 104.300 155.500M107.500 146.500C110.300 150 110.300 154.500 107.500 158" stroke="#e6ffff" stroke-width="1.700" fill="none" stroke-linecap="round"/>
<path d="M116 150.500L119 149.500L121 151L123 148.500L125 150L127 147L129 149L131 146L133 148L136 142L139 140L142 143L145 141L148 146L150 145L152 149L156 150.500L152 152L150 156L148 155L145 160L142 158L139 161L136 159L133 153L131 155L129 152L127 154L125 151L123 152.500L121 150L119 151.500Z" fill="#fff"/>
<path d="M183 150.300L185 148.500L188.500 145.700L192 148.500L195 150.300L197 148.800L199 149.500L201 146.500L203 144.800L205 146.500L207 149.500L209 148.800L211 150.300L213 147.500L216.800 143.500L220.500 147.500L222.500 150.300L224.500 149L225.900 148.300L227.700 150.300L225.900 152.300L224.500 151.600L222.500 150.300L220.500 153L216.800 157L213 153L211 150.300L209 151.800L207 151L205 154L203 155.800L201 154L199 151L197 151.800L195 150.300L192 152L188.500 154.900L185 152Z" fill="#f9dcff"/>
<circle cx="169.600" cy="150.200" r="12.500" fill="#1d1b1a"/>
<path d="M163.800 146.600L169.500 146.600C172.300 146.600 172.300 142.800 169.500 143.300M163.300 150.800L175 150.800C178.200 150.800 178 146.800 175.200 147.400M165.500 155L171 155C174 155 173.800 158.800 171 158.300" stroke="#e9e4dc" stroke-width="1.700" fill="none" stroke-linecap="round"/>
<path d="M164.300 157L176.300 143.500" stroke="#1d1b1a" stroke-width="4"/><path d="M164.300 157L176.300 143.500" stroke="#e9e4dc" stroke-width="1.700" stroke-linecap="round"/>
</svg></div>
<div class="cap" style="top:984px">Wind Remover</div>
<div style="position:absolute;left:328px;top:1013px;width:107px;height:36px;border-radius:18px;background:#151515"></div>
<div style="position:absolute;left:330px;top:1015px;width:50px;height:32px;border-radius:16px;background:#3d3d3d;border:1px solid #4a4a4a"></div>
<svg class="abs" style="left:345px;top:1022px" width="20" height="20" viewBox="0 0 20 20"><path d="M.8 .8h8.500v8.500h-8.500zM10.700 .8h8.500v8.500h-8.500zM.8 10.700h8.500v8.500h-8.500zM10.700 10.700h8.500v8.500h-8.500z" fill="#14b8f4"/></svg>
<svg class="abs" style="left:397px;top:1022px" width="22" height="20" viewBox="0 0 22 20"><path d="M1 2.500h19M1 10h19M1 17.500h19" stroke="#666" stroke-width="2.700"/></svg>

<style>
#title{position:absolute;left:1011px;top:110px;width:400px;text-align:center;font-size:23px;line-height:28px;font-weight:bold;letter-spacing:0;color:#fff;white-space:nowrap}
#close{position:absolute;left:1870px;top:109px;width:30px;height:30px;border-radius:50%;background:#737373}
#tip{position:absolute;left:469px;top:179px;width:71px;height:28px;border-radius:14px;background:#f3f3f3;color:#1c1c1c;font-size:16.5px;line-height:28px;padding-left:10px;letter-spacing:.75px;white-space:nowrap}
#tiparrow{position:absolute;left:498px;top:206px;width:0;height:0;border-left:5.5px solid transparent;border-right:5.5px solid transparent;border-top:9px solid #f3f3f3}
#wavebox{position:absolute;left:506px;top:218px;width:1370px;height:218px;border:1px solid #555;border-left:none}
#playhead{position:absolute;left:506.5px;top:218px;width:1.6px;height:188px;background:#fff}
.tl{font-family:"Liberation Sans",sans-serif;font-size:16.2px;font-weight:bold;fill:#d6d6d6;letter-spacing:-.75px}
.pbtn{position:absolute;top:480px;width:50px;height:50px;border-radius:5px;background:#3c3c3c;border:1px solid #5c5c5c}
.radio{position:absolute;top:492px;width:25px;height:25px;border-radius:50%;border:2.5px solid #fff}
.radio.off{border-color:#c4c4c4;border-width:2px}
.radio.on:after{content:"";position:absolute;left:3.5px;top:3.5px;width:13px;height:13px;border-radius:50%;background:#fff}
.rl{position:absolute;top:491.300px;font-size:20.7px;line-height:25px;color:#fff;white-space:nowrap;-webkit-text-stroke:.2px #fff}
#divider{position:absolute;left:463px;top:572px;width:1456px;height:5px;background:#111}
#ss{position:absolute;left:506px;top:608px;font-size:20px;letter-spacing:.33px;line-height:25px;color:#fff;white-space:nowrap;-webkit-text-stroke:.2px #fff}
#track{position:absolute;left:510px;top:660px;width:513px;height:10px;border-radius:5px;background:#222}
#thumb{position:absolute;left:510px;top:652px;width:41px;height:26px;border-radius:13px;background:#f4f4f4;box-shadow:0 1px 3px rgba(0,0,0,.5)}
#num{position:absolute;left:1048px;top:642px;width:150px;height:45px;border-radius:5px;background:#222;border:1px solid #6a6a6a;font-size:20px;line-height:43px;padding-left:10px;color:#fff}
#pct{position:absolute;left:1204px;top:653px;font-size:18px;line-height:24px;color:#fff;-webkit-text-stroke:.4px #fff}
</style>
<div id="title">Speech Enhancement</div>
<div id="close"><svg width="30" height="30" viewBox="0 0 30 30" style="position:absolute;left:0;top:0"><path d="M9.700 9.900L20.300 20.500M20.300 9.900L9.700 20.500" stroke="#303030" stroke-width="2" stroke-linecap="round" fill="none"/></svg></div>
<div id="tip">00:00.0</div>
<div id="tiparrow"></div>
<div id="wavebox"></div>
<svg class="abs" style="left:0;top:0" width="1919" height="1079" viewBox="0 0 1919 1079">
 <defs>
  <filter id="vb" color-interpolation-filters="sRGB" x="0" y="-0.1" width="1" height="1.2" filterUnits="objectBoundingBox"><feGaussianBlur stdDeviation="0.75 4.8"/></filter>
  <clipPath id="wc"><rect x="507" y="219" width="1368" height="187"/></clipPath>
 </defs>
 <g clip-path="url(#wc)"><path filter="url(#vb)" stroke="#00a3d8" stroke-width="1.1" fill="none" d="M507.5 287v46M508.5 274v58M509.5 278v63M510.5 297v41M511.5 302v27M512.5 305v13M513.5 304v27M514.5 308v9M515.5 304v22M516.5 305v11M517.5 298v17M518.5 302v14M519.5 309v6M520.5 309v12M521.5 309v9M522.5 306v10M523.5 307v8M524.5 309v6M525.5 305v12M526.5 308v10M527.5 307v8M528.5 303v17M529.5 308v10M530.5 306v18M531.5 303v13M532.5 297v19M533.5 307v16M534.5 308v10M535.5 309v13M536.5 301v19M537.5 295v22M538.5 299v24M539.5 300v22M540.5 287v55M541.5 288v56M542.5 283v80M543.5 263v116M544.5 254v96M545.5 271v95M546.5 281v76M547.5 278v66M548.5 282v87M549.5 281v67M550.5 273v98M551.5 284v69M552.5 270v99M553.5 258v112M554.5 277v75M555.5 274v98M556.5 248v96M557.5 279v68M558.5 277v81M559.5 263v86M560.5 282v73M561.5 271v90M562.5 245v122M563.5 265v99M564.5 258v86M565.5 248v123M566.5 251v120M567.5 272v80M568.5 282v79M569.5 284v57M570.5 282v59M571.5 277v63M572.5 285v58M573.5 282v68M574.5 284v88M575.5 264v80M576.5 277v74M577.5 274v70M578.5 254v123M579.5 271v84M580.5 284v58M581.5 277v68M582.5 258v83M583.5 286v86M584.5 272v68M585.5 272v65M586.5 274v98M587.5 260v98M588.5 284v60M589.5 289v69M590.5 280v75M591.5 290v42M592.5 274v87M593.5 278v67M594.5 285v51M595.5 305v18M596.5 306v10M597.5 308v8M598.5 308v12M599.5 302v14M600.5 303v20M601.5 303v12M602.5 309v5M603.5 309v5M604.5 308v11M605.5 306v9M606.5 308v10M607.5 310v7M608.5 304v14M609.5 306v10M610.5 309v9M611.5 307v20M612.5 281v41M613.5 292v64M614.5 265v74M615.5 290v45M616.5 266v88M617.5 296v54M618.5 270v69M619.5 293v44M620.5 295v33M621.5 261v87M622.5 278v87M623.5 280v83M624.5 262v77M625.5 283v60M626.5 282v73M627.5 280v71M628.5 282v91M629.5 275v80M630.5 265v109M631.5 271v104M632.5 268v91M633.5 266v76M634.5 269v77M635.5 282v89M636.5 278v79M637.5 256v105M638.5 273v87M639.5 263v109M640.5 280v82M641.5 276v75M642.5 254v104M643.5 264v105M644.5 249v106M645.5 263v94M646.5 268v97M647.5 270v87M648.5 270v106M649.5 261v112M650.5 250v97M651.5 267v108M652.5 255v88M653.5 282v70M654.5 284v61M655.5 284v77M656.5 260v111M657.5 283v79M658.5 266v75M659.5 256v116M660.5 283v89M661.5 278v73M662.5 253v112M663.5 286v61M664.5 275v68M665.5 291v46M666.5 278v49M667.5 290v41M668.5 305v17M669.5 301v20M670.5 309v19M671.5 302v24M672.5 309v6M673.5 309v11M674.5 309v6M675.5 309v11M676.5 306v9M677.5 310v10M678.5 308v9M679.5 310v5M680.5 307v8M681.5 310v10M682.5 308v10M683.5 310v9M684.5 310v9M685.5 309v6M686.5 308v12M687.5 309v5M688.5 308v7M689.5 309v7M690.5 308v8M691.5 306v12M692.5 290v31M693.5 294v30M694.5 293v34M695.5 289v42M696.5 270v77M697.5 288v58M698.5 257v80M699.5 261v87M700.5 272v95M701.5 275v78M702.5 263v112M703.5 276v93M704.5 261v99M705.5 277v69M706.5 289v47M707.5 292v63M708.5 291v40M709.5 298v51M710.5 280v56M711.5 303v17M712.5 306v15M713.5 307v12M714.5 307v25M715.5 294v26M716.5 308v19M717.5 308v9M718.5 309v8M719.5 306v12M720.5 308v10M721.5 309v8M722.5 308v9M723.5 308v8M724.5 306v11M725.5 300v23M726.5 291v38M727.5 289v55M728.5 296v32M729.5 266v61M730.5 275v72M731.5 294v63M732.5 264v84M733.5 271v87M734.5 290v56M735.5 284v72M736.5 275v75M737.5 289v61M738.5 289v47M739.5 302v18M740.5 305v18M741.5 306v29M742.5 301v25M743.5 298v30M744.5 301v17M745.5 290v42M746.5 299v26M747.5 294v25M748.5 290v31M749.5 304v18M750.5 288v34M751.5 286v64M752.5 294v33M753.5 293v45M754.5 281v56M755.5 285v40M756.5 297v31M757.5 278v53M758.5 284v44M759.5 295v38M760.5 279v67M761.5 280v51M762.5 287v48M763.5 290v37M764.5 273v54M765.5 269v83M766.5 301v30M767.5 281v71M768.5 296v28M769.5 302v46M770.5 302v28M771.5 304v24M772.5 280v40M773.5 287v38M774.5 285v46M775.5 305v34M776.5 301v17M777.5 306v18M778.5 301v19M779.5 305v16M780.5 303v35M781.5 305v29M782.5 286v34M783.5 278v58M784.5 276v49M785.5 294v36M786.5 265v75M787.5 291v45M788.5 292v37M789.5 294v62M790.5 294v62M791.5 299v27M792.5 296v26M793.5 302v41M794.5 286v50M795.5 296v43M796.5 284v41M797.5 294v24M798.5 294v28M799.5 289v42M800.5 300v22M801.5 272v53M802.5 288v45M803.5 287v66M804.5 253v89M805.5 262v87M806.5 265v87M807.5 279v66M808.5 278v99M809.5 269v77M810.5 255v120M811.5 278v60M812.5 292v38M813.5 295v31M814.5 301v22M815.5 299v39M816.5 297v22M817.5 307v12M818.5 307v9M819.5 309v7M820.5 298v17M821.5 307v12M822.5 303v12M823.5 309v6M824.5 308v8M825.5 300v22M826.5 301v13M827.5 309v11M828.5 300v17M829.5 304v11M830.5 306v25M831.5 294v37M832.5 285v33M833.5 306v13M834.5 298v33M835.5 279v56M836.5 290v49M837.5 298v30M838.5 305v30M839.5 305v34M840.5 299v19M841.5 308v10M842.5 302v22M843.5 308v7M844.5 305v14M845.5 307v9M846.5 304v11M847.5 308v10M848.5 297v23M849.5 299v19M850.5 308v8M851.5 295v27M852.5 307v8M853.5 305v17M854.5 306v11M855.5 300v34M856.5 306v12M857.5 302v22M858.5 289v34M859.5 278v66M860.5 285v47M861.5 257v82M862.5 259v85M863.5 279v88M864.5 275v104M865.5 265v83M866.5 274v85M867.5 255v131M868.5 276v82M869.5 273v114M870.5 276v71M871.5 279v78M872.5 246v132M873.5 256v125M874.5 249v101M875.5 283v89M876.5 267v67M877.5 276v62M878.5 291v42M879.5 301v22M880.5 304v17M881.5 290v27M882.5 292v24M883.5 307v18M884.5 301v16M885.5 309v6M886.5 309v12M887.5 309v6M888.5 303v12M889.5 308v12M890.5 305v10M891.5 309v6M892.5 298v18M893.5 301v27M894.5 307v10M895.5 290v33M896.5 306v22M897.5 304v16M898.5 305v27M899.5 286v41M900.5 286v33M901.5 305v18M902.5 286v52M903.5 303v16M904.5 303v19M905.5 288v30M906.5 292v37M907.5 291v40M908.5 298v23M909.5 303v19M910.5 291v28M911.5 304v27M912.5 304v14M913.5 306v19M914.5 304v35M915.5 290v49M916.5 305v12M917.5 306v17M918.5 295v27M919.5 304v18M920.5 296v33M921.5 292v45M922.5 294v27M923.5 288v34M924.5 297v25M925.5 293v27M926.5 304v16M927.5 305v31M928.5 299v22M929.5 302v40M930.5 299v22M931.5 289v42M932.5 280v41M933.5 297v41M934.5 284v59M935.5 301v25M936.5 299v27M937.5 272v65M938.5 272v62M939.5 273v64M940.5 291v59M941.5 267v64M942.5 279v68M943.5 292v44M944.5 295v35M945.5 296v42M946.5 288v38M947.5 302v24M948.5 292v30M949.5 302v18M950.5 292v32M951.5 306v12M952.5 303v21M953.5 298v19M954.5 306v21M955.5 304v14M956.5 306v30M957.5 306v17M958.5 305v15M959.5 293v44M960.5 305v12M961.5 298v19M962.5 307v25M963.5 305v24M964.5 305v26M965.5 304v12M966.5 308v13M967.5 301v30M968.5 308v14M969.5 306v14M970.5 308v10M971.5 304v28M972.5 308v12M973.5 296v38M974.5 307v9M975.5 291v43M976.5 304v12M977.5 293v25M978.5 294v28M979.5 297v20M980.5 298v18M981.5 306v22M982.5 296v20M983.5 307v11M984.5 304v14M985.5 308v9M986.5 299v33M987.5 307v17M988.5 293v26M989.5 287v34M990.5 293v38M991.5 287v42M992.5 288v54M993.5 282v68M994.5 283v58M995.5 294v51M996.5 286v46M997.5 279v68M998.5 286v46M999.5 283v50M1000.5 288v55M1001.5 287v59M1002.5 277v59M1003.5 273v63M1004.5 271v84M1005.5 279v54M1006.5 285v50M1007.5 274v52M1008.5 283v64M1009.5 294v39M1010.5 307v27M1011.5 306v21M1012.5 298v17M1013.5 302v24M1014.5 309v7M1015.5 303v12M1016.5 298v18M1017.5 299v17M1018.5 304v27M1019.5 306v12M1020.5 298v25M1021.5 299v27M1022.5 292v65M1023.5 278v78M1024.5 291v60M1025.5 292v51M1026.5 284v48M1027.5 281v51M1028.5 296v43M1029.5 306v33M1030.5 301v17M1031.5 300v16M1032.5 294v26M1033.5 307v16M1034.5 306v10M1035.5 301v14M1036.5 299v17M1037.5 303v27M1038.5 304v18M1039.5 307v8M1040.5 308v8M1041.5 303v15M1042.5 305v24M1043.5 308v8M1044.5 301v15M1045.5 308v11M1046.5 307v12M1047.5 304v22M1048.5 294v29M1049.5 289v43M1050.5 298v51M1051.5 295v32M1052.5 296v46M1053.5 278v64M1054.5 297v27M1055.5 304v26M1056.5 298v23M1057.5 298v24M1058.5 290v37M1059.5 306v27M1060.5 307v14M1061.5 305v13M1062.5 307v20M1063.5 308v14M1064.5 291v25M1065.5 307v15M1066.5 304v19M1067.5 297v20M1068.5 307v10M1069.5 308v22M1070.5 298v26M1071.5 308v20M1072.5 299v20M1073.5 299v20M1074.5 308v9M1075.5 307v8M1076.5 307v18M1077.5 300v28M1078.5 300v17M1079.5 304v15M1080.5 298v22M1081.5 307v15M1082.5 293v24M1083.5 296v20M1084.5 308v9M1085.5 300v30M1086.5 300v17M1087.5 295v22M1088.5 307v24M1089.5 301v25M1090.5 299v38M1091.5 302v30M1092.5 281v69M1093.5 298v36M1094.5 302v15M1095.5 308v15M1096.5 308v22M1097.5 308v8M1098.5 308v20M1099.5 307v8M1100.5 309v7M1101.5 303v17M1102.5 303v19M1103.5 309v11M1104.5 307v16M1105.5 300v25M1106.5 309v16M1107.5 298v29M1108.5 309v7M1109.5 309v7M1110.5 300v24M1111.5 304v20M1112.5 304v12M1113.5 309v7M1114.5 302v13M1115.5 308v9M1116.5 309v7M1117.5 308v13M1118.5 308v8M1119.5 298v20M1120.5 301v18M1121.5 309v8M1122.5 307v15M1123.5 308v13M1124.5 306v10M1125.5 300v15M1126.5 301v15M1127.5 309v7M1128.5 302v26M1129.5 309v9M1130.5 306v17M1131.5 308v10M1132.5 308v17M1133.5 308v19M1134.5 308v8M1135.5 303v15M1136.5 309v11M1137.5 309v14M1138.5 303v20M1139.5 304v12M1140.5 307v10M1141.5 299v17M1142.5 299v16M1143.5 308v7M1144.5 299v19M1145.5 307v17M1146.5 308v9M1147.5 306v16M1148.5 303v17M1149.5 308v8M1150.5 309v14M1151.5 304v17M1152.5 309v8M1153.5 302v17M1154.5 309v9M1155.5 299v16M1156.5 309v8M1157.5 303v21M1158.5 309v7M1159.5 308v8M1160.5 306v10M1161.5 308v8M1162.5 297v24M1163.5 309v18M1164.5 309v8M1165.5 298v24M1166.5 304v13M1167.5 309v10M1168.5 309v6M1169.5 308v7M1170.5 308v13M1171.5 305v12M1172.5 306v10M1173.5 309v10M1174.5 278v72M1175.5 249v121M1176.5 244v140M1177.5 237v148M1178.5 232v164M1179.5 231v162M1180.5 230v163M1181.5 236v151M1182.5 244v143M1183.5 249v132M1184.5 243v139M1185.5 249v122M1186.5 255v115M1187.5 256v110M1188.5 259v111M1189.5 267v96M1190.5 263v95M1191.5 268v94M1192.5 274v82M1193.5 275v79M1194.5 272v77M1195.5 281v65M1196.5 283v60M1197.5 303v22M1198.5 296v24M1199.5 306v27M1200.5 307v17M1201.5 306v21M1202.5 308v29M1203.5 302v18M1204.5 297v33M1205.5 293v47M1206.5 278v81M1207.5 274v74M1208.5 280v84M1209.5 255v97M1210.5 286v75M1211.5 283v54M1212.5 291v65M1213.5 269v79M1214.5 285v58M1215.5 291v72M1216.5 287v60M1217.5 268v88M1218.5 283v54M1219.5 281v51M1220.5 269v67M1221.5 270v63M1222.5 290v42M1223.5 290v38M1224.5 299v45M1225.5 297v29M1226.5 298v32M1227.5 297v38M1228.5 291v34M1229.5 280v61M1230.5 304v34M1231.5 284v50M1232.5 306v29M1233.5 299v18M1234.5 308v29M1235.5 300v17M1236.5 308v8M1237.5 308v17M1238.5 307v9M1239.5 297v26M1240.5 308v17M1241.5 305v18M1242.5 304v21M1243.5 302v21M1244.5 309v11M1245.5 306v15M1246.5 307v17M1247.5 306v10M1248.5 308v7M1249.5 306v9M1250.5 307v9M1251.5 306v12M1252.5 305v20M1253.5 309v17M1254.5 306v14M1255.5 302v24M1256.5 307v11M1257.5 293v23M1258.5 303v18M1259.5 308v12M1260.5 303v24M1261.5 308v20M1262.5 306v11M1263.5 300v15M1264.5 304v15M1265.5 308v15M1266.5 308v9M1267.5 307v14M1268.5 309v7M1269.5 308v9M1270.5 303v12M1271.5 303v13M1272.5 307v8M1273.5 307v16M1274.5 306v14M1275.5 309v7M1276.5 309v9M1277.5 306v14M1278.5 309v10M1279.5 298v21M1280.5 308v9M1281.5 307v10M1282.5 284v44M1283.5 285v60M1284.5 262v87M1285.5 263v98M1286.5 259v102M1287.5 259v88M1288.5 259v98M1289.5 254v91M1290.5 278v65M1291.5 256v120M1292.5 262v89M1293.5 256v111M1294.5 267v80M1295.5 276v77M1296.5 275v78M1297.5 262v114M1298.5 283v75M1299.5 285v57M1300.5 260v95M1301.5 256v92M1302.5 287v59M1303.5 270v101M1304.5 252v99M1305.5 275v65M1306.5 269v72M1307.5 288v47M1308.5 291v61M1309.5 292v73M1310.5 297v57M1311.5 300v24M1312.5 289v33M1313.5 294v24M1314.5 308v19M1315.5 303v22M1316.5 303v12M1317.5 305v15M1318.5 307v17M1319.5 309v15M1320.5 305v10M1321.5 309v9M1322.5 303v11M1323.5 309v11M1324.5 309v12M1325.5 308v7M1326.5 308v9M1327.5 308v11M1328.5 309v11M1329.5 308v10M1330.5 306v11M1331.5 308v14M1332.5 299v23M1333.5 306v10M1334.5 309v19M1335.5 298v32M1336.5 302v27M1337.5 270v76M1338.5 282v51M1339.5 282v81M1340.5 277v84M1341.5 269v101M1342.5 260v83M1343.5 288v55M1344.5 277v76M1345.5 269v91M1346.5 298v51M1347.5 283v61M1348.5 298v23M1349.5 292v38M1350.5 301v28M1351.5 307v9M1352.5 304v21M1353.5 308v15M1354.5 296v20M1355.5 301v25M1356.5 299v22M1357.5 298v45M1358.5 273v65M1359.5 289v71M1360.5 258v87M1361.5 265v108M1362.5 251v108M1363.5 267v95M1364.5 277v71M1365.5 278v90M1366.5 272v88M1367.5 271v87M1368.5 280v62M1369.5 248v103M1370.5 283v76M1371.5 261v80M1372.5 271v74M1373.5 280v52M1374.5 297v64M1375.5 276v56M1376.5 291v35M1377.5 283v45M1378.5 276v63M1379.5 277v78M1380.5 292v36M1381.5 288v47M1382.5 289v46M1383.5 272v94M1384.5 274v99M1385.5 252v89M1386.5 266v84M1387.5 283v91M1388.5 280v76M1389.5 267v106M1390.5 267v80M1391.5 278v60M1392.5 257v113M1393.5 288v45M1394.5 291v44M1395.5 271v82M1396.5 279v44M1397.5 286v49M1398.5 296v47M1399.5 308v9M1400.5 300v31M1401.5 302v15M1402.5 304v20M1403.5 308v8M1404.5 308v8M1405.5 306v9M1406.5 308v7M1407.5 303v12M1408.5 302v13M1409.5 309v19M1410.5 308v20M1411.5 298v29M1412.5 307v13M1413.5 304v39M1414.5 277v60M1415.5 289v42M1416.5 270v70M1417.5 274v60M1418.5 287v47M1419.5 268v82M1420.5 287v78M1421.5 284v61M1422.5 287v54M1423.5 262v80M1424.5 287v60M1425.5 283v82M1426.5 290v78M1427.5 292v70M1428.5 276v58M1429.5 285v49M1430.5 293v38M1431.5 289v73M1432.5 261v98M1433.5 294v40M1434.5 265v65M1435.5 273v63M1436.5 260v72M1437.5 267v72M1438.5 289v44M1439.5 263v85M1440.5 286v61M1441.5 259v80M1442.5 275v60M1443.5 289v68M1444.5 272v63M1445.5 292v39M1446.5 279v63M1447.5 291v41M1448.5 281v66M1449.5 274v67M1450.5 296v31M1451.5 279v54M1452.5 280v46M1453.5 277v53M1454.5 276v74M1455.5 291v33M1456.5 274v58M1457.5 277v49M1458.5 300v44M1459.5 298v25M1460.5 298v34M1461.5 303v26M1462.5 298v30M1463.5 304v29M1464.5 289v50M1465.5 304v25M1466.5 304v25M1467.5 308v24M1468.5 293v27M1469.5 306v13M1470.5 306v9M1471.5 299v16M1472.5 309v6M1473.5 309v12M1474.5 309v6M1475.5 305v9M1476.5 309v8M1477.5 307v10M1478.5 306v9M1479.5 303v16M1480.5 309v5M1481.5 308v9M1482.5 309v6M1483.5 308v7M1484.5 307v15M1485.5 309v8M1486.5 305v10M1487.5 303v19M1488.5 308v8M1489.5 303v14M1490.5 308v15M1491.5 304v11M1492.5 309v7M1493.5 305v29M1494.5 289v51M1495.5 279v69M1496.5 294v48M1497.5 253v118M1498.5 275v81M1499.5 260v93M1500.5 265v79M1501.5 269v89M1502.5 282v63M1503.5 250v117M1504.5 255v100M1505.5 266v96M1506.5 267v63M1507.5 281v50M1508.5 282v47M1509.5 290v62M1510.5 289v36M1511.5 295v32M1512.5 279v43M1513.5 303v26M1514.5 306v20M1515.5 286v37M1516.5 306v14M1517.5 303v14M1518.5 308v8M1519.5 307v12M1520.5 307v10M1521.5 308v14M1522.5 293v31M1523.5 298v31M1524.5 302v34M1525.5 292v42M1526.5 282v56M1527.5 289v45M1528.5 288v58M1529.5 280v72M1530.5 286v61M1531.5 257v86M1532.5 271v80M1533.5 281v91M1534.5 282v80M1535.5 290v42M1536.5 270v67M1537.5 299v31M1538.5 297v41M1539.5 304v17M1540.5 283v49M1541.5 307v12M1542.5 306v19M1543.5 301v29M1544.5 295v26M1545.5 298v29M1546.5 297v23M1547.5 292v38M1548.5 280v41M1549.5 276v48M1550.5 275v67M1551.5 279v87M1552.5 269v80M1553.5 259v112M1554.5 265v87M1555.5 270v85M1556.5 257v93M1557.5 271v90M1558.5 271v81M1559.5 253v122M1560.5 266v91M1561.5 278v73M1562.5 279v82M1563.5 264v79M1564.5 250v100M1565.5 253v119M1566.5 247v99M1567.5 270v106M1568.5 282v60M1569.5 265v92M1570.5 250v119M1571.5 267v111M1572.5 269v87M1573.5 266v81M1574.5 283v68M1575.5 287v77M1576.5 290v39M1577.5 308v10M1578.5 307v12M1579.5 306v16M1580.5 306v9M1581.5 309v6M1582.5 306v8M1583.5 309v7M1584.5 310v4M1585.5 307v9M1586.5 309v4M1587.5 307v8M1588.5 308v10M1589.5 307v8M1590.5 310v5M1591.5 309v7M1592.5 310v5M1593.5 308v9M1594.5 309v12M1595.5 307v7M1596.5 309v10M1597.5 309v9M1598.5 309v6M1599.5 304v13M1600.5 306v9M1601.5 308v10M1602.5 309v9M1603.5 307v17M1604.5 306v10M1605.5 309v6M1606.5 304v11M1607.5 309v6M1608.5 307v15M1609.5 305v17M1610.5 309v6M1611.5 302v14M1612.5 303v13M1613.5 309v7M1614.5 309v17M1615.5 305v11M1616.5 307v10M1617.5 309v17M1618.5 305v23M1619.5 306v14M1620.5 308v8M1621.5 296v29M1622.5 308v19M1623.5 300v17M1624.5 304v25M1625.5 306v23M1626.5 308v9M1627.5 302v14M1628.5 308v19M1629.5 306v18M1630.5 308v8M1631.5 307v9M1632.5 295v22M1633.5 305v11M1634.5 305v12M1635.5 307v9M1636.5 308v17M1637.5 307v9M1638.5 308v8M1639.5 308v8M1640.5 302v15M1641.5 308v15M1642.5 308v8M1643.5 298v18M1644.5 306v21M1645.5 298v18M1646.5 307v17M1647.5 306v25M1648.5 308v23M1649.5 305v12M1650.5 305v11M1651.5 300v16M1652.5 294v27M1653.5 306v10M1654.5 302v14M1655.5 295v22M1656.5 304v17M1657.5 307v20M1658.5 306v18M1659.5 302v16M1660.5 305v11M1661.5 307v23M1662.5 306v19M1663.5 307v15M1664.5 305v16M1665.5 306v11M1666.5 306v12M1667.5 307v20M1668.5 306v14M1669.5 291v38M1670.5 292v40M1671.5 307v12M1672.5 307v19M1673.5 299v21M1674.5 304v22M1675.5 297v21M1676.5 293v27M1677.5 299v19M1678.5 306v28M1679.5 296v31M1680.5 307v11M1681.5 306v12M1682.5 305v15M1683.5 307v13M1684.5 299v19M1685.5 293v31M1686.5 297v22M1687.5 303v24M1688.5 304v13M1689.5 293v37M1690.5 305v12M1691.5 292v32M1692.5 307v12M1693.5 307v23M1694.5 306v28M1695.5 296v21M1696.5 298v21M1697.5 297v33M1698.5 306v11M1699.5 288v34M1700.5 286v44M1701.5 285v58M1702.5 287v44M1703.5 288v69M1704.5 266v97M1705.5 251v91M1706.5 271v61M1707.5 273v84M1708.5 288v58M1709.5 259v92M1710.5 278v59M1711.5 291v50M1712.5 282v55M1713.5 285v51M1714.5 269v85M1715.5 286v53M1716.5 276v69M1717.5 258v83M1718.5 285v78M1719.5 290v58M1720.5 286v73M1721.5 279v76M1722.5 291v59M1723.5 277v65M1724.5 270v89M1725.5 291v46M1726.5 285v51M1727.5 291v46M1728.5 289v65M1729.5 282v52M1730.5 287v56M1731.5 286v47M1732.5 293v38M1733.5 260v92M1734.5 294v56M1735.5 262v81M1736.5 294v45M1737.5 287v44M1738.5 284v45M1739.5 267v78M1740.5 281v78M1741.5 279v53M1742.5 292v39M1743.5 295v58M1744.5 268v67M1745.5 291v56M1746.5 267v96M1747.5 292v63M1748.5 269v83M1749.5 289v43M1750.5 271v64M1751.5 289v52M1752.5 290v63M1753.5 293v35M1754.5 284v59M1755.5 273v73M1756.5 269v88M1757.5 288v49M1758.5 296v34M1759.5 287v38M1760.5 286v39M1761.5 296v54M1762.5 303v17M1763.5 299v22M1764.5 291v29M1765.5 287v52M1766.5 290v33M1767.5 302v31M1768.5 294v34M1769.5 296v36M1770.5 281v69M1771.5 269v60M1772.5 292v45M1773.5 282v52M1774.5 292v38M1775.5 288v52M1776.5 260v101M1777.5 266v99M1778.5 261v86M1779.5 269v61M1780.5 276v70M1781.5 290v54M1782.5 263v77M1783.5 278v56M1784.5 289v68M1785.5 295v36M1786.5 278v59M1787.5 295v50M1788.5 290v52M1789.5 291v45M1790.5 289v40M1791.5 301v22M1792.5 281v48M1793.5 305v34M1794.5 306v12M1795.5 303v15M1796.5 304v16M1797.5 308v12M1798.5 309v10M1799.5 306v10M1800.5 308v7M1801.5 308v13M1802.5 308v10M1803.5 306v8M1804.5 304v13M1805.5 310v7M1806.5 309v5M1807.5 303v14M1808.5 304v11M1809.5 286v36M1810.5 279v72M1811.5 283v77M1812.5 277v73M1813.5 260v93M1814.5 256v102M1815.5 260v92M1816.5 261v101M1817.5 289v67M1818.5 284v73M1819.5 271v90M1820.5 289v53M1821.5 268v100M1822.5 268v67M1823.5 274v61M1824.5 277v83M1825.5 290v74M1826.5 273v64M1827.5 290v52M1828.5 267v79M1829.5 292v40M1830.5 291v65M1831.5 290v56M1832.5 287v65M1833.5 284v51M1834.5 263v84M1835.5 272v86M1836.5 261v71M1837.5 287v46M1838.5 282v77M1839.5 270v60M1840.5 293v62M1841.5 276v61M1842.5 284v48M1843.5 268v70M1844.5 266v81M1845.5 293v44M1846.5 290v71M1847.5 277v55M1848.5 290v50M1849.5 281v68M1850.5 283v58M1851.5 290v60M1852.5 283v52M1853.5 279v91M1854.5 290v46M1855.5 271v68M1856.5 286v60M1857.5 287v62M1858.5 278v88M1859.5 256v77M1860.5 276v81M1861.5 262v96M1862.5 272v80M1863.5 282v58M1864.5 264v100M1865.5 258v97M1866.5 284v74M1867.5 268v79M1868.5 273v68M1869.5 277v65M1870.5 291v49M1871.5 285v83M1872.5 280v61M1873.5 287v49M1874.5 284v50"/></g>
 <g stroke="#c6c6c6" stroke-width="2.100">
  <path d="M507.5 406v25M641.2 406v25M774.9 406v25M908.6 406v25M1042.3 406v25M1176 406v25M1309.7 406v25M1443.4 406v25M1577.1 406v25M1710.8 406v25M1844.5 406v25"/>
 </g>
 <g class="tl" clip-path="url(#tc)">
  <clipPath id="tc"><rect x="507" y="406" width="1368" height="30"/></clipPath>
  <text x="513" y="430.5">00:00.0</text><text x="646.7" y="430.5">00:00.5</text><text x="780.4" y="430.5">00:01.0</text><text x="914.1" y="430.5">00:01.5</text><text x="1047.8" y="430.5">00:02.0</text><text x="1181.5" y="430.5">00:02.5</text><text x="1315.2" y="430.5">00:03.0</text><text x="1448.9" y="430.5">00:03.5</text><text x="1582.6" y="430.5">00:04.0</text><text x="1716.3" y="430.5">00:04.5</text><text x="1850" y="430.5">00:05.0</text>
 </g>
</svg>
<div id="playhead"></div>
<div class="pbtn" style="left:506px"><svg width="48" height="48" viewBox="0 0 48 48"><path d="M13 9.500L39.500 25L13 40.500Z" fill="none" stroke="#c9c9c9" stroke-width="2" stroke-linejoin="miter"/></svg></div>
<div class="pbtn" style="left:576px"><svg width="48" height="48" viewBox="0 0 48 48"><rect x="12" y="11.500" width="25.500" height="25" fill="none" stroke="#c9c9c9" stroke-width="2"/></svg></div>
<div class="radio on" style="left:671px"></div><div class="rl" style="left:710px">Adjusted</div>
<div class="radio off" style="left:812px"></div><div class="rl" style="left:851px">Original</div>
<div id="divider"></div>
<div id="ss">Speech Strength</div>
<div id="track"></div><div id="thumb"></div>
<div id="num">0<svg width="12" height="30" viewBox="0 0 12 30" style="position:absolute;left:129px;top:6px"><path d="M6 2.5L10 8.5H2Z M6 27.5L10 21.5H2Z" fill="#b0b0b0" stroke="#b0b0b0" stroke-width="1" stroke-linejoin="round"/></svg></div>
<div id="pct">%</div>

</body>
</html>
